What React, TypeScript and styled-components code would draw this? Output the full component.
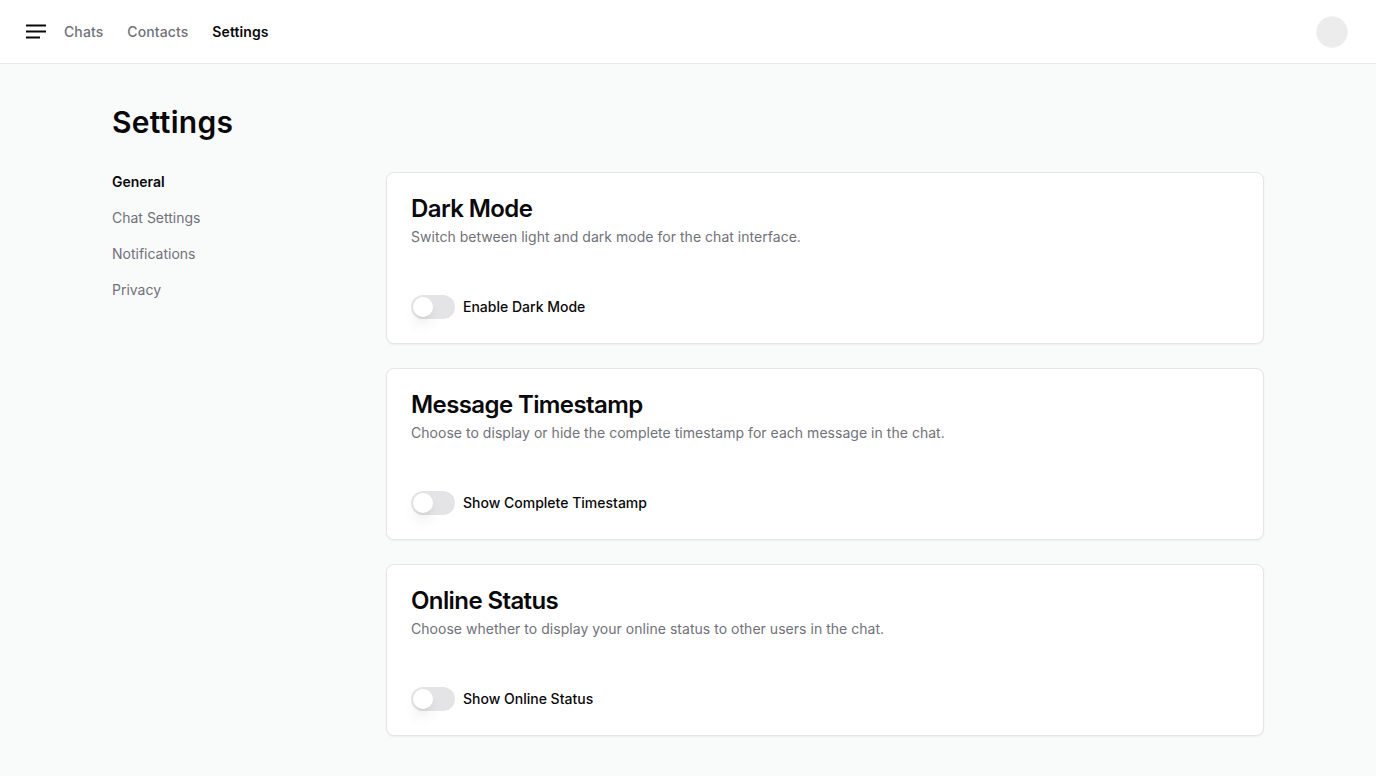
import React, { useState } from "react";
import styled, { createGlobalStyle } from "styled-components";

const GlobalStyle = createGlobalStyle`
  * { box-sizing: border-box; }
  html, body { margin: 0; padding: 0; }
  body {
    font-family: Inter, "Noto Sans", sans-serif;
    color: #09090b;
    background: #fafafa;
    -webkit-font-smoothing: antialiased;
  }
`;

const Page = styled.div`
  display: flex;
  flex-direction: column;
  min-height: 100vh;
  width: 100%;
`;

const Header = styled.header`
  display: flex;
  align-items: center;
  gap: 18px;
  height: 64px;
  padding: 0 28px 0 26px;
  background: #ffffff;
  border-bottom: 1px solid #e8e8ea;
`;

const MenuButton = styled.button`
  display: flex;
  align-items: center;
  justify-content: center;
  padding: 0;
  border: none;
  background: transparent;
  width: 20px;
  height: 20px;
  cursor: pointer;
`;

const Nav = styled.nav`
  display: flex;
  align-items: center;
  gap: 24px;
  flex: 1;
`;

const NavLink = styled.a<{ $active?: boolean }>`
  font-size: 14px;
  letter-spacing: 0.1px;
  font-weight: ${(p) => (p.$active ? 600 : 500)};
  color: ${(p) => (p.$active ? "#09090b" : "#71717a")};
  text-decoration: none;
  cursor: pointer;
`;

const Avatar = styled.div`
  width: 32px;
  height: 32px;
  border-radius: 50%;
  background: #ececec;
  border: 1px solid #f2f2f2;
`;

const Main = styled.main`
  flex: 1;
  display: flex;
  flex-direction: column;
  gap: 32px;
  padding: 40px;
  background: #f9fafa;
`;

const TitleWrap = styled.div`
  width: 100%;
  max-width: 1152px;
  margin: 0 auto;
`;

const Title = styled.h1`
  margin: 0;
  font-size: 30px;
  line-height: 36px;
  font-weight: 600;
  letter-spacing: 0.3px;
`;

const Layout = styled.div`
  width: 100%;
  max-width: 1152px;
  margin: 0 auto;
  display: grid;
  grid-template-columns: 250px 1fr;
  gap: 24px;
  align-items: start;
`;

const SideNav = styled.nav`
  display: grid;
  gap: 16px;
  font-size: 14px;
  line-height: 20px;
`;

const SideLink = styled.a<{ $active?: boolean }>`
  color: ${(p) => (p.$active ? "#09090b" : "#71717a")};
  font-weight: ${(p) => (p.$active ? 600 : 400)};
  text-decoration: none;
  cursor: pointer;
`;

const Cards = styled.div`
  display: grid;
  gap: 24px;
`;

const Card = styled.section`
  background: #ffffff;
  border: 1px solid #e6e6e8;
  border-radius: 8px;
  box-shadow: 0 1px 2px rgba(0, 0, 0, 0.05);
`;

const CardHeader = styled.div`
  display: flex;
  flex-direction: column;
  gap: 6px;
  padding: 24px;
`;

const CardTitle = styled.h3`
  margin: 0;
  font-size: 24px;
  line-height: 24px;
  font-weight: 600;
  letter-spacing: -0.6px;
`;

const CardDescription = styled.p`
  margin: 0;
  font-size: 14px;
  line-height: 20px;
  letter-spacing: 0.03px;
  color: #71717a;
`;

const CardContent = styled.div`
  padding: 24px;
  display: flex;
  align-items: center;
  gap: 8px;
`;

const SwitchTrack = styled.button<{ $on: boolean }>`
  position: relative;
  width: 44px;
  height: 24px;
  padding: 0;
  border-radius: 999px;
  border: 2px solid transparent;
  background: ${(p) => (p.$on ? "#18181b" : "#e4e4e7")};
  cursor: pointer;
  flex-shrink: 0;
`;

const SwitchThumb = styled.span<{ $on: boolean }>`
  position: absolute;
  top: 0;
  left: ${(p) => (p.$on ? "20px" : "0")};
  width: 20px;
  height: 20px;
  border-radius: 50%;
  background: #ffffff;
  box-shadow: 0 10px 15px -3px rgba(0, 0, 0, 0.1), 0 4px 6px -4px rgba(0, 0, 0, 0.1);
  transition: left 0.15s;
`;

const Label = styled.label`
  font-size: 14px;
  line-height: 20px;
  font-weight: 500;
  cursor: pointer;
`;

const MenuIcon = () => (
  <svg width="20" height="20" viewBox="0 0 20 20" fill="none">
    <path d="M0 3.5h20M0 9.5h20M0 15.5h14" stroke="#09090b" strokeWidth="2" />
  </svg>
);

type Setting = { title: string; description: string; label: string };

const settings: Setting[] = [
  {
    title: "Dark Mode",
    description: "Switch between light and dark mode for the chat interface.",
    label: "Enable Dark Mode",
  },
  {
    title: "Message Timestamp",
    description: "Choose to display or hide the complete timestamp for each message in the chat.",
    label: "Show Complete Timestamp",
  },
  {
    title: "Online Status",
    description: "Choose whether to display your online status to other users in the chat.",
    label: "Show Online Status",
  },
];

const SettingCard = ({ s }: { s: Setting }) => {
  const [on, setOn] = useState(false);
  return (
    <Card>
      <CardHeader>
        <CardTitle>{s.title}</CardTitle>
        <CardDescription>{s.description}</CardDescription>
      </CardHeader>
      <CardContent>
        <SwitchTrack $on={on} onClick={() => setOn(!on)} aria-label={s.label}>
          <SwitchThumb $on={on} />
        </SwitchTrack>
        <Label onClick={() => setOn(!on)}>{s.label}</Label>
      </CardContent>
    </Card>
  );
};

export default function App() {
  return (
    <>
      <GlobalStyle />
      <Page>
        <Header>
          <MenuButton aria-label="Menu">
            <MenuIcon />
          </MenuButton>
          <Nav>
            <NavLink>Chats</NavLink>
            <NavLink>Contacts</NavLink>
            <NavLink $active>Settings</NavLink>
          </Nav>
          <Avatar />
        </Header>
        <Main>
          <TitleWrap>
            <Title>Settings</Title>
          </TitleWrap>
          <Layout>
            <SideNav>
              <SideLink $active>General</SideLink>
              <SideLink>Chat Settings</SideLink>
              <SideLink>Notifications</SideLink>
              <SideLink>Privacy</SideLink>
            </SideNav>
            <Cards>
              {settings.map((s) => (
                <SettingCard key={s.title} s={s} />
              ))}
            </Cards>
          </Layout>
        </Main>
      </Page>
    </>
  );
}
